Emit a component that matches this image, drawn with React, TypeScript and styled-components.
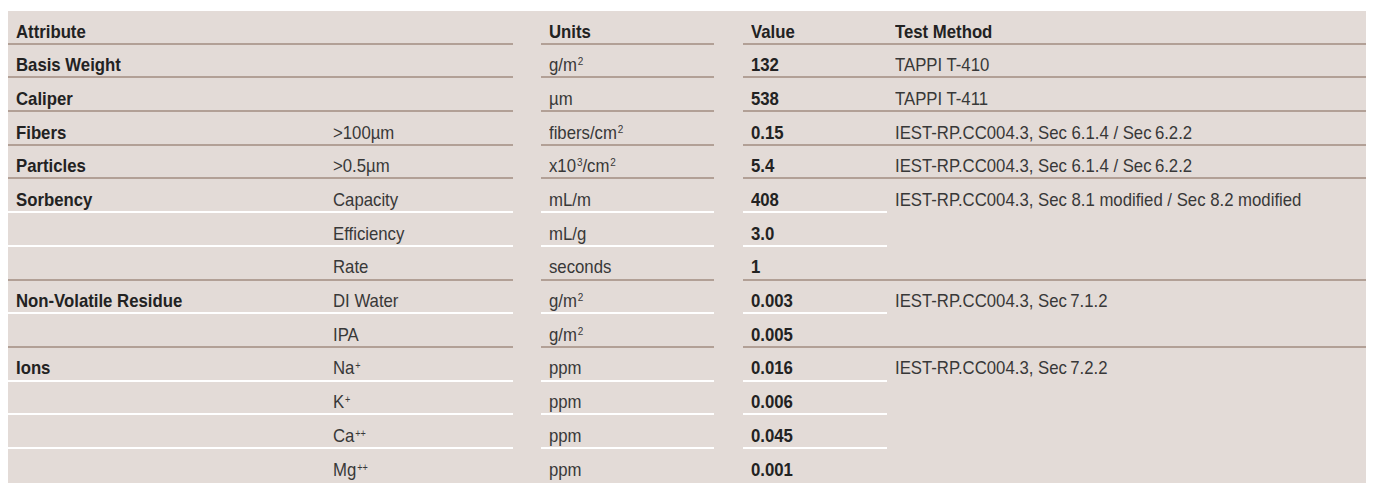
import React from "react";
import styled, { createGlobalStyle } from "styled-components";

const Global = createGlobalStyle`
  html, body { margin: 0; padding: 0; background: #ffffff; }
  body { font-family: "Liberation Sans", Arial, sans-serif; }
`;

const Page = styled.div`
  padding: 11px 13px 0 8px;
`;

const Grid = styled.div`
  width: 1358px;
  display: grid;
  grid-template-columns: 317px 188px 28px 173px 29px 144px 479px;
  grid-auto-rows: 33.7px;
  background: #e3dbd7;
  color: #363636;
  font-size: 18.5px;
`;

type Line = "brown" | "white" | "none";

const lineColor = (l: Line) =>
  l === "brown" ? "#b2a096" : l === "white" ? "#ffffff" : "transparent";

const Cell = styled.div<{
  $col: string;
  $row: number;
  $span?: number;
  $line: Line;
  $bold?: boolean;
}>`
  grid-column: ${(p) => p.$col};
  grid-row: ${(p) => p.$row} / span ${(p) => p.$span ?? 1};
  box-sizing: border-box;
  padding: 11.6px 8px 0 8px;
  line-height: 18px;
  white-space: nowrap;
  font-weight: ${(p) => (p.$bold ? 700 : 400)};
  color: ${(p) => (p.$bold ? "#222222" : "#383838")};
  border-bottom: 2px solid ${(p) => lineColor(p.$line)};
`;

const Text = styled.span`
  display: inline-block;
  transform: scaleX(0.905);
  transform-origin: left center;
`;

const Sup = styled.sup`
  font-size: 11px;
  line-height: 0;
  vertical-align: 6px;
  margin-left: 1px;
`;

const Plus = styled.sup`
  font-size: 10px;
  line-height: 0;
  vertical-align: 5px;
  margin-left: 1px;
`;

type Row = {
  name?: string;
  sub?: React.ReactNode;
  units: React.ReactNode;
  value: string;
  line: Line;
  method?: { text: string; span: number };
};

const gm2 = (
  <>
    g/m<Sup>2</Sup>
  </>
);

const rows: Row[] = [
  { name: "Basis Weight", units: gm2, value: "132", line: "brown", method: { text: "TAPPI T-410", span: 1 } },
  { name: "Caliper", units: "µm", value: "538", line: "brown", method: { text: "TAPPI T-411", span: 1 } },
  {
    name: "Fibers",
    sub: ">100µm",
    units: (
      <>
        fibers/cm<Sup>2</Sup>
      </>
    ),
    value: "0.15",
    line: "brown",
    method: { text: "IEST-RP.CC004.3, Sec 6.1.4 / Sec\u20096.2.2", span: 1 },
  },
  {
    name: "Particles",
    sub: ">0.5µm",
    units: (
      <>
        x10<Sup>3</Sup>/cm<Sup>2</Sup>
      </>
    ),
    value: "5.4",
    line: "brown",
    method: { text: "IEST-RP.CC004.3, Sec 6.1.4 / Sec\u20096.2.2", span: 1 },
  },
  {
    name: "Sorbency",
    sub: "Capacity",
    units: "mL/m",
    value: "408",
    line: "white",
    method: { text: "IEST-RP.CC004.3, Sec 8.1 modified / Sec 8.2 modified", span: 3 },
  },
  { sub: "Efficiency", units: "mL/g", value: "3.0", line: "white" },
  { sub: "Rate", units: "seconds", value: "1", line: "brown" },
  {
    name: "Non-Volatile Residue",
    sub: "DI Water",
    units: gm2,
    value: "0.003",
    line: "white",
    method: { text: "IEST-RP.CC004.3, Sec\u20097.1.2", span: 2 },
  },
  { sub: "IPA", units: gm2, value: "0.005", line: "brown" },
  {
    name: "Ions",
    sub: (
      <>
        Na<Plus>+</Plus>
      </>
    ),
    units: "ppm",
    value: "0.016",
    line: "white",
    method: { text: "IEST-RP.CC004.3, Sec\u20097.2.2", span: 4 },
  },
  {
    sub: (
      <>
        K<Plus>+</Plus>
      </>
    ),
    units: "ppm",
    value: "0.006",
    line: "white",
  },
  {
    sub: (
      <>
        Ca<Plus>++</Plus>
      </>
    ),
    units: "ppm",
    value: "0.045",
    line: "white",
  },
  {
    sub: (
      <>
        Mg<Plus>++</Plus>
      </>
    ),
    units: "ppm",
    value: "0.001",
    line: "none",
  },
];

const T = ({ children }: { children?: React.ReactNode }) =>
  children ? <Text>{children}</Text> : null;

export default function App() {
  return (
    <Page>
      <Global />
      <Grid>
        <Cell $col="1 / span 2" $row={1} $line="brown" $bold>
          <T>Attribute</T>
        </Cell>
        <Cell $col="4" $row={1} $line="brown" $bold>
          <T>Units</T>
        </Cell>
        <Cell $col="6" $row={1} $line="brown" $bold>
          <T>Value</T>
        </Cell>
        <Cell $col="7" $row={1} $line="brown" $bold>
          <T>Test Method</T>
        </Cell>
        {rows.map((r, i) => {
          const row = i + 2;
          return (
            <React.Fragment key={i}>
              <Cell $col="1" $row={row} $line={r.line} $bold>
                <T>{r.name}</T>
              </Cell>
              <Cell $col="2" $row={row} $line={r.line}>
                <T>{r.sub}</T>
              </Cell>
              <Cell $col="4" $row={row} $line={r.line}>
                <T>{r.units}</T>
              </Cell>
              <Cell $col="6" $row={row} $line={r.line} $bold>
                <T>{r.value}</T>
              </Cell>
              {r.method && (
                <Cell
                  $col="7"
                  $row={row}
                  $span={r.method.span}
                  $line={i + r.method.span - 1 === rows.length - 1 ? "none" : "brown"}
                >
                  <T>{r.method.text}</T>
                </Cell>
              )}
            </React.Fragment>
          );
        })}
      </Grid>
    </Page>
  );
}
